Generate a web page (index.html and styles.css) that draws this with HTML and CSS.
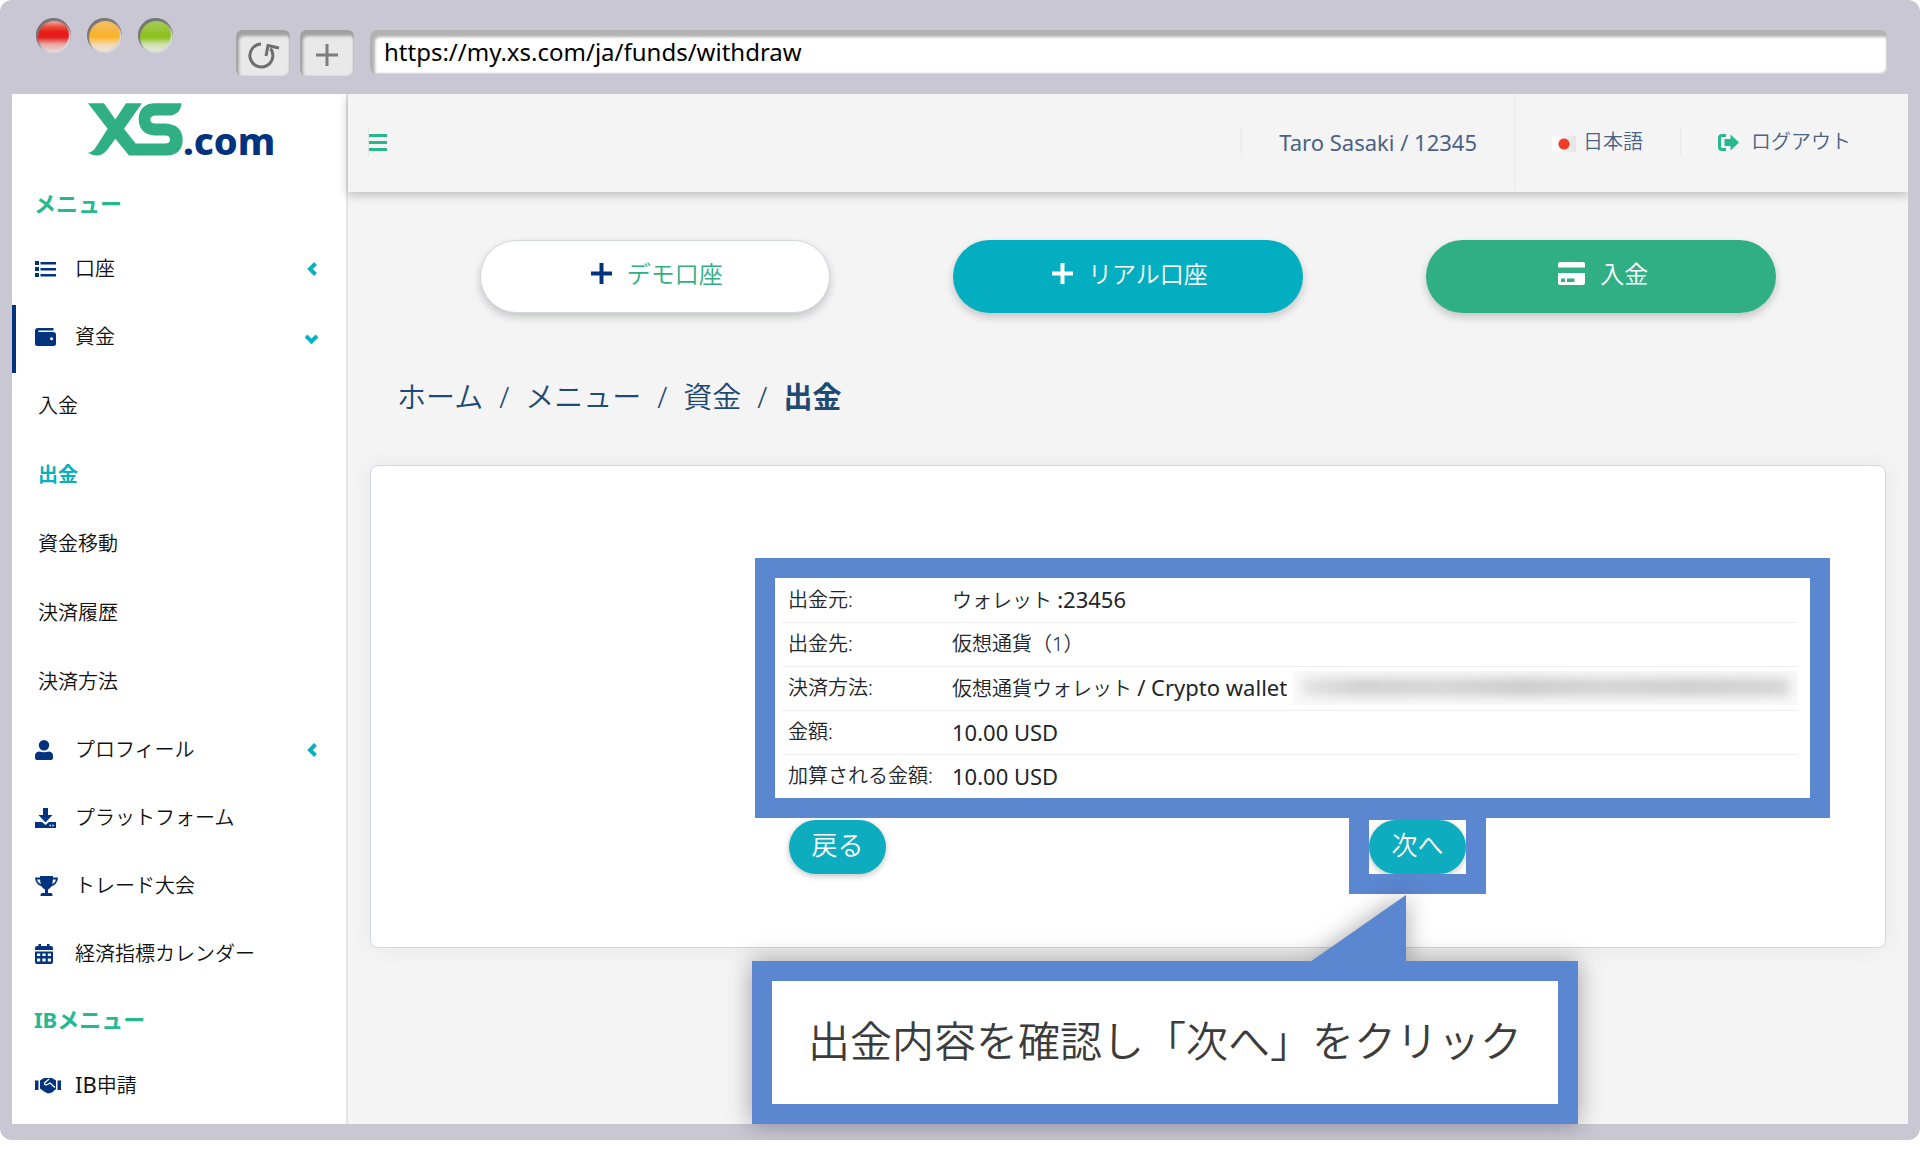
FILE: index.html
```html
<!DOCTYPE html>
<html lang="ja">
<head>
<meta charset="utf-8">
<meta name="viewport" content="width=device-width, initial-scale=1">
<title>出金</title>
<link rel="stylesheet" href="styles.css">
</head>
<body>
<div class="browser">
  <div class="titlebar">
    <div class="lights">
      <span class="light light-red"></span>
      <span class="light light-amber"></span>
      <span class="light light-green"></span>
    </div>
    <div class="tools">
      <button class="tool" type="button" aria-label="再読み込み">
        <svg width="34" height="30" viewBox="0 0 34 30" fill="none" stroke="#6e6e6e" stroke-width="3"><path d="M15 4A11.500 11.500 0 1 0 24.500 8.500"/><path d="M33 8L22 5.500L20 16"/></svg>
      </button>
      <button class="tool" type="button" aria-label="新しいタブ">
        <svg width="22" height="22" viewBox="0 0 22 22" fill="none" stroke="#7d7d7d" stroke-width="3"><path d="M11 0V22M0 11H22"/></svg>
      </button>
    </div>
    <input class="address" type="text" aria-label="アドレス" value="https://my.xs.com/ja/funds/withdraw">
  </div>

  <div class="viewport">
    <aside class="sidebar">
      <a class="logo" href="#" aria-label="XS.com">
        <svg width="95" height="53" viewBox="265 308 285 158" fill="#30af85"><path d="M265 308H313L347 357L379 308H427L373 385L408 429H497Q511 429 511 417Q511 405 497 405H463C430 402 417 382 417 355C417 326 436 308 465 308H546C543 332 530 345 505 345H466Q452 346 452 358Q452 369 466 369H497C532 371 549 388 549 418C549 447 532 465 503 465H388L347 415L324 446C310 466 288 471 265 457C279 454 285 446 292 435L324 385Z"/></svg>
        <span class="logo-text">.com</span>
      </a>
      <nav>
        <h2 class="nav-heading">メニュー</h2>
        <ul class="nav-list">
          <li><a class="nav-item" href="#"><svg class="icon" viewBox="0 0 21 20"><path d="M0 2h4v4H0zM0 8h4v4H0zM0 14h4v4H0zM5.500 3H21v2.500H5.500zM5.500 9H21v2.500H5.500zM5.500 15H21v2.500H5.500z"/></svg><span>口座</span><svg class="chevron" viewBox="0 0 14 14"><path d="M10.500 1.500L5 7L10.500 12.500"/></svg></a></li>
          <li><a class="nav-item is-open" href="#"><svg class="icon" viewBox="0 0 21 20"><path fill-rule="evenodd" d="M3 1H18.500V3.500H3.500Q3 4.500 3.500 5H18Q21 5 21 7.500V16.500Q21 19 18.500 19H2.500Q0 19 0 16.500V3.500Q0 1 3 1ZM16.500 10.300a1.500 1.500 0 1 0 .01 3a1.500 1.500 0 1 0-.01-3z"/></svg><span>資金</span><svg class="chevron" viewBox="0 0 14 14"><path d="M1 6L6.500 11.500L12 6"/></svg></a>
            <ul class="sub-list">
              <li><a class="sub-item" href="#">入金</a></li>
              <li><a class="sub-item is-current" href="#">出金</a></li>
              <li><a class="sub-item" href="#">資金移動</a></li>
              <li><a class="sub-item" href="#">決済履歴</a></li>
              <li><a class="sub-item" href="#">決済方法</a></li>
            </ul>
          </li>
          <li><a class="nav-item" href="#"><svg class="icon" viewBox="0 0 21 20"><path d="M9 0a5 5 0 0 1 0 10.500A5 5 0 0 1 9 0ZM0 18V16Q0 12 4 11.500Q9 13 14 11.500Q18 12 18 16V18Q18 20 16 20H2Q0 20 0 18Z"/></svg><span>プロフィール</span><svg class="chevron" viewBox="0 0 14 14"><path d="M10.500 1.500L5 7L10.500 12.500"/></svg></a></li>
          <li><a class="nav-item" href="#"><svg class="icon" viewBox="0 0 21 20"><path fill-rule="evenodd" d="M8 0H13V7H17.500L10.500 14.500L3.500 7H8ZM0 14H7L10.500 17L14 14H21V20H0ZM14.500 16.800v1.500h1.500v-1.500zM17.300 16.800v1.500h1.500v-1.500z"/></svg><span>プラットフォーム</span></a></li>
          <li><a class="nav-item" href="#"><svg class="icon icon-trophy" viewBox="0 0 23 20"><path d="M5 0H18V3Q17.500 12 13 13.500V17H16Q17.500 17 17.500 20H5.500Q5.500 17 7 17H10V13.500Q5.500 12 5 3Z"/><path fill="none" stroke="#02337f" stroke-width="1.800" d="M6 2.500H1Q1.500 8 8 10M17 2.500H22Q21.500 8 15 10"/></svg><span>トレード大会</span></a></li>
          <li><a class="nav-item" href="#"><svg class="icon" viewBox="0 0 21 20"><path fill-rule="evenodd" d="M3.500 0H6V2H12V0H14.500V2H16Q18 2 18 4V6H0V4Q0 2 2 2H3.500ZM0 7.500H18V18Q18 20 16 20H2Q0 20 0 18ZM2 9.500v2.500h3.200V9.500zM7.400 9.500v2.500h3.200V9.500zM12.800 9.500v2.500h3.200V9.500zM2 14.500v3h3.200v-3zM7.400 14.500v3h3.200v-3zM12.800 14.500v3h3.200v-3z"/></svg><span>経済指標カレンダー</span></a></li>
        </ul>
        <h2 class="nav-heading">IBメニュー</h2>
        <ul class="nav-list">
          <li><a class="nav-item" href="#"><svg class="icon icon-hands" viewBox="0 0 26 20"><path d="M0 5.500H3.500V15H0ZM22.500 5.500H26V15H22.500ZM5 5.500L9 3H17L21 5.500V14L17 17.500L13 18.500L9 16.500L5 13.500Z"/><path fill="none" stroke="#fff" stroke-width="1.300" d="M14 4L9.500 8Q9.500 10.500 12.500 9.500L15 8L20 12.500"/></svg><span><b class="latin">IB</b>申請</span></a></li>
        </ul>
      </nav>
    </aside>

    <main class="main">
      <header class="topbar">
        <button class="menu-toggle" type="button" aria-label="メニュー"><svg width="18" height="17" viewBox="0 0 18 17" fill="#26b88f"><path d="M0 0h18v3H0zM0 7h18v3H0zM0 14h18v3H0z"/></svg></button>
        <a class="account latin" href="#">Taro Sasaki / 12345</a>
        <a class="language" href="#"><span class="flag"></span>日本語</a>
        <a class="logout" href="#"><svg width="21" height="17" viewBox="0 0 21 17" fill="#26b88f"><path d="M8 1.500H4Q1.500 1.500 1.500 4V13Q1.500 15.500 4 15.500H8" fill="none" stroke="#26b88f" stroke-width="3"/><path d="M6.500 5H12.500V0.500L21 8.500L12.500 16.500V12H6.500Z"/></svg>ログアウト</a>
      </header>

      <div class="quick-actions">
        <button class="pill pill-demo" type="button"><svg class="plus" width="21" height="21" viewBox="0 0 21 21"><path d="M10.500 0V21M0 10.500H21"/></svg>デモ口座</button>
        <button class="pill pill-real" type="button"><svg class="plus" width="21" height="21" viewBox="0 0 21 21"><path d="M10.500 0V21M0 10.500H21"/></svg>リアル口座</button>
        <button class="pill pill-deposit" type="button"><svg width="27" height="23" viewBox="0 0 27 23" fill="#fff"><path fill-rule="evenodd" d="M2 0H25Q27 0 27 2V5.500H0V2Q0 0 2 0ZM0 11H27V21Q27 23 25 23H2Q0 23 0 21ZM3 16.500V20H7V16.500ZM9 16.500V20H16.500V16.500Z"/></svg>入金</button>
      </div>

      <nav class="breadcrumb" aria-label="パンくず">
        <a href="#">ホーム</a><span>/</span><a href="#">メニュー</a><span>/</span><a href="#">資金</a><span>/</span><strong>出金</strong>
      </nav>

      <section class="card">
        <div class="summary highlight">
          <table class="details">
            <tbody>
              <tr><th scope="row">出金元:</th><td>ウォレット <span class="latin">:23456</span></td></tr>
              <tr><th scope="row">出金先:</th><td>仮想通貨（1）</td></tr>
              <tr><th scope="row">決済方法:</th><td><div class="wallet"><span>仮想通貨ウォレット <span class="latin">/ Crypto wallet</span></span><span class="redacted"></span></div></td></tr>
              <tr><th scope="row">金額:</th><td class="latin">10.00 USD</td></tr>
              <tr><th scope="row">加算される金額:</th><td class="latin">10.00 USD</td></tr>
            </tbody>
          </table>
        </div>
        <div class="actions">
          <div><button class="action" type="button">戻る</button></div>
          <div class="next highlight">
            <button class="action" type="button">次へ</button>
            <div class="callout">
              <svg class="pointer" width="96" height="67" viewBox="0 0 96 67"><path fill="#5b86d0" d="M96 0V67H0Z"/></svg>
              <p>出金内容を確認し「次へ」をクリック</p>
            </div>
          </div>
        </div>
      </section>
    </main>
  </div>
</div>
</body>
</html>
```
FILE: styles.css
```css
:root {
  --navy: #02337f;
  --green: #26b88f;
  --teal: #0dadbf;
  --blue: #5b86d0;
  --frame: #c8c7d3;
}

* { box-sizing: border-box; }

body {
  margin: 0;
  background: #fff;
  color: #212529;
  font-family: "Noto Sans", "Noto Sans CJK JP", sans-serif;
  font-size: 20px;
  line-height: 28px;
  font-weight: 350;
}

a { color: inherit; text-decoration: none; }
ul { margin: 0; padding: 0; list-style: none; }
button { border: 0; padding: 0; font: inherit; cursor: pointer; }

.browser {
  min-height: calc(100vh - 10px);
  padding: 0 12px 16px;
  border-radius: 12px;
  background: var(--frame);
  display: flex;
  flex-direction: column;
}

/* Browser chrome */
.titlebar {
  height: 94px;
  padding: 18px 21px 0 24px;
  display: flex;
  align-items: flex-start;
}
.lights { display: flex; gap: 16px; width: 200px; }
.light {
  width: 35px;
  height: 35px;
  border-radius: 50%;
  box-shadow: inset 1px 2px 1px 1px #77757c, inset -1px -1px 1px 1px #d8d7df;
}
.light-red { background: linear-gradient(#f0b3a8 8%, #e8503c 25%, #e61c19 40%, #e61c19 55%, #e9a7a5 75%, #efdddd); }
.light-amber { background: linear-gradient(#f5c166 8%, #f6b645 35%, #fab42c 45%, #fab42c 55%, #f3d9ab 75%, #efebe2); }
.light-green { background: linear-gradient(#a5cc57 8%, #98c638 35%, #8dc21f 45%, #8dc21f 55%, #cfdfad 75%, #e9ece2); }
.tools { display: flex; gap: 10px; margin: 12px 16px 0 0; }
.tool {
  width: 54px;
  height: 46px;
  border-radius: 6px;
  background: #e9e9e9;
  box-shadow: inset 2px 5px 3px 1px #a1a1a1, inset -1px 0 2px #bbb;
  display: flex;
  align-items: center;
  justify-content: center;
  padding: 4px 0 0;
}
.address {
  flex: 1;
  min-width: 0;
  height: 44px;
  margin-top: 12px;
  padding: 0 14px 2px;
  border: 0;
  border-radius: 6px;
  background: #fff;
  box-shadow: inset 4px 6px 3px 1px #b2b2b2, inset -1px -1px 2px #ccc;
  color: #000;
  font-family: "Noto Sans", sans-serif;
  font-size: 24px;
  font-weight: 400;
}

.viewport { flex: 1; display: flex; background: #f4f4f4; }

/* Sidebar */
.sidebar {
  flex: 0 0 336px;
  border-right: 2px solid #e4e4e6;
  background: #fff;
  color: #111;
}
.logo { display: flex; height: 80px; padding: 9px 0 0 76px; }
.logo-text {
  color: var(--navy);
  font-family: "Noto Sans", sans-serif;
  font-size: 38px;
  font-weight: 800;
  line-height: 74px;
}
.nav-heading {
  height: 63px;
  margin: 0;
  padding: 0 0 6px 22px;
  display: flex;
  align-items: center;
  color: var(--green);
  font-size: 22px;
  font-weight: 700;
}
.nav-item {
  height: 68px;
  padding: 0 27px 4px 23px;
  display: flex;
  align-items: center;
}
.nav-item.is-open { padding-left: 19px; border-left: 4px solid var(--navy); }
.nav-item span { flex: 1; margin-left: 19px; }
.icon { width: 21px; height: 20px; fill: var(--navy); }
.icon-trophy { width: 23px; margin-right: -2px; }
.icon-hands { width: 26px; margin-right: -5px; }
.chevron { width: 14px; height: 14px; fill: none; stroke: #0ab0bd; stroke-width: 4; }
.sub-item {
  height: 69px;
  padding: 0 0 4px 26px;
  display: flex;
  align-items: center;
}
.sub-item.is-current { color: #0ab0bd; font-weight: 700; }

/* Main column */
.main { flex: 1; min-width: 0; }
.topbar {
  height: 98px;
  padding: 0 57px 2px 20px;
  display: flex;
  align-items: center;
  background: #f4f4f4;
  box-shadow: 0 3px 10px rgba(0, 0, 0, .24);
  clip-path: inset(0 0 -20px -10px);
  color: #4a6286;
}
.menu-toggle {
  height: 30px;
  margin-right: auto;
  border-left: 1px solid #e4e4e4;
  background: none;
  display: flex;
  align-items: center;
}
.account, .language, .logout { display: flex; align-items: center; padding: 0 37px; }
.account { border-left: 1px solid #e9e9e9; }
.language { align-self: stretch; border-left: 1px solid #e9e9e9; gap: 7px; }
.logout { padding-right: 0; border-left: 1px solid #e9e9e9; gap: 12px; }
.flag {
  width: 24px;
  height: 16px;
  margin-top: 4px;
  background: radial-gradient(circle, #f23a26 0 5px, transparent 6px), linear-gradient(90deg, #fff, #e4e4e4);
}

/* Latin runs are set a step larger so they balance the kana and kanji */
.latin, .details td.latin { font-size: 22px; font-weight: 400; }

.quick-actions {
  padding: 48px 70px 0;
  display: grid;
  grid-template-columns: repeat(3, 1fr);
  justify-items: center;
}
.pill {
  width: 74%;
  height: 73px;
  padding: 0 0 6px 4px;
  border-radius: 37px;
  box-shadow: 0 4px 8px rgba(0, 0, 0, .2);
  display: flex;
  align-items: center;
  justify-content: center;
  gap: 15px;
  color: #fff;
  font-size: 24px;
}
.plus { fill: none; stroke: #fff; stroke-width: 4; }
.pill-demo { border: 1px solid #d3d7e2; background: #fff; color: #30af85; }
.pill-demo .plus { stroke: var(--navy); }
.pill-real { background: #02aebf; }
.pill-deposit { background: #30af85; }

.breadcrumb {
  padding: 64px 49px 48px;
  display: flex;
  gap: 16px;
  color: #1f4a73;
  font-size: 29px;
  line-height: 40px;
}
.breadcrumb strong { font-weight: 700; }

/* Withdrawal card */
.card {
  height: 483px;
  margin: 0 22px;
  padding: 112px 75px 0 404px;
  border: 1px solid #d3d7e2;
  border-radius: 8px;
  background: #fff;
  box-shadow: 0 0 24px rgba(0, 0, 0, .06);
}
.highlight { outline: 20px solid var(--blue); }
.summary { padding: 0 12px 0 7px; }
.details { width: 100%; border-collapse: collapse; }
.details th, .details td { height: 44px; padding: 0; text-align: left; font-weight: inherit; }
.details th { width: 170px; padding-left: 6px; white-space: nowrap; }
.details tr + tr { border-top: 1px solid #eee; }
.wallet { display: flex; align-items: center; gap: 6px; white-space: nowrap; }
.redacted { flex: 1; height: 34px; padding: 7px 9px; overflow: hidden; background: #fafafa; }
.redacted::before {
  content: "";
  display: block;
  height: 18px;
  background: linear-gradient(90deg, #e2e2e2, #cdcdcd 12%, #d3d3d3 28%, #c8c8c8 45%, #d1d1d1 62%, #cbcbcb 80%, #d3d3d3);
  filter: blur(6px);
}

.actions {
  padding: 22px 0 0 14px;
  display: grid;
  grid-template-columns: 25fr 19fr;
  justify-items: start;
}
.action {
  display: block;
  width: 97px;
  height: 54px;
  padding-bottom: 4px;
  border-radius: 27px;
  background: var(--teal);
  box-shadow: 0 2px 6px rgba(0, 0, 0, .25);
  color: #fff;
  font-size: 26px;
}
.next { position: relative; background: #fff; }
.callout {
  position: absolute;
  top: 141px;
  right: -112px;
  width: 826px;
  border: 20px solid var(--blue);
  background: #fff;
  filter: drop-shadow(0 0 12px rgba(0, 0, 0, .35));
}
.callout p {
  margin: 0;
  padding: 30px 0 33px;
  color: #3c3c3c;
  font-size: 42px;
  line-height: 60px;
  text-align: center;
  white-space: nowrap;
}
.pointer { position: absolute; right: 152px; top: -86px; }
```
